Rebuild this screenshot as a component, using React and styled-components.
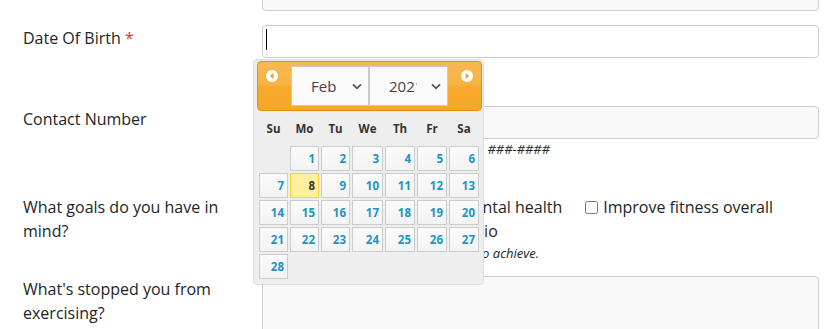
import React from 'react';
import styled, { createGlobalStyle } from 'styled-components';

const Global = createGlobalStyle`
  html, body { margin: 0; padding: 0; background: #fff; overflow: hidden; }
  body { font-family: "Open Sans", "Noto Sans", sans-serif; color: #212529; }
  *, *::before, *::after { box-sizing: border-box; }
`;

const Page = styled.form`
  padding: 0 20px 0 23px;
  margin-top: -22px;
`;

const Row = styled.div`
  display: grid;
  grid-template-columns: 239px 557px;
  margin-top: ${p => p.$gap || 0}px;
`;

const Label = styled.label`
  font-size: 16px;
  line-height: 24px;
  padding: 1px 15px 0 0;
`;

const Req = styled.span`
  color: #dc3545;
`;

const Control = styled.div`
  position: relative;
`;

const TextInput = styled.input`
  display: block;
  width: 100%;
  height: 33px;
  border: 1px solid #ccc;
  border-radius: 4px;
  background: ${p => (p.$focus ? '#fff' : '#f9f9f9')};
  padding: 4px 8px;
  font: inherit;
  font-size: 16px;
  outline: none;
`;

const TextArea = styled.textarea`
  display: block;
  width: 100%;
  height: 90px;
  border: 1px solid #ccc;
  border-radius: 4px;
  background: #f9f9f9;
  resize: none;
  font: inherit;
`;

const Caret = styled.span`
  position: absolute;
  left: 4px;
  top: 4px;
  width: 1px;
  height: 21px;
  background: #000;
`;

const Help = styled.div`
  font-size: 13px;
  line-height: 20px;
  font-style: italic;
  white-space: nowrap;
`;

const Checks = styled.div`
  padding-top: 1px;
  font-size: 16px;
  line-height: 24px;
`;

const CheckLine = styled.div`
  display: flex;
  column-gap: 22px;
  white-space: nowrap;
`;

const CheckItem = styled.label`
  display: inline-flex;
  align-items: center;
  gap: 5px;
`;

const Box = styled.input.attrs({ type: 'checkbox' })`
  width: 13px;
  height: 13px;
  margin: 0 0 0 1px;
`;

/* ---------- datepicker ---------- */

const Picker = styled.div`
  position: absolute;
  left: -9px;
  top: calc(100% + 1px);
  z-index: 10;
  width: 231px;
  padding: 1px 1px 3px 3px;
  background: #eeeeee;
  border: 1px solid #dddddd;
  border-radius: 4px;
  color: #333;
  font-family: "Open Sans", "Noto Sans", sans-serif;
`;

const PickerHeader = styled.div`
  display: flex;
  padding: 4px 0;
  border: 1px solid #e78f08;
  border-radius: 4px;
  background: linear-gradient(#f8b851 0%, #f7b445 45%, #f6a92b 55%, #f6a828 100%);
`;

const Nav = styled.a`
  display: flex;
  width: 33px;
  padding: 4px ${p => (p.$next ? '8px' : '0')} 0 ${p => (p.$next ? '0' : '8px')};
  justify-content: ${p => (p.$next ? 'flex-end' : 'flex-start')};
  align-items: flex-start;
  cursor: pointer;
`;

const SelectBox = styled.div`
  display: flex;
  align-items: center;
  width: ${p => p.$w}px;
  height: 40px;
  border: 1px solid #cacaca;
  background: #fafafa;
  padding: 0 6px 0 19px;
  font-size: 15px;
  color: #444;
`;

const SelectValue = styled.span`
  width: ${p => p.$vw}px;
  overflow: hidden;
  white-space: nowrap;
`;

const ChevronWrap = styled.span`
  display: flex;
  margin-left: auto;
`;

const Cal = styled.table`
  border-collapse: separate;
  border-spacing: 2px;
  table-layout: fixed;
  width: 224px;
  font-size: 11.5px;
  font-weight: 700;
`;

const Col = styled.col`
  width: ${p => p.$w}px;
`;

const DayName = styled.th`
  height: 31px;
  padding: 0;
  text-align: center;
  color: #333;
  font-weight: 700;
`;

const DayCell = styled.td`
  height: 25px;
  padding: 0;
`;

const Day = styled.a`
  display: block;
  height: 25px;
  line-height: 23px;
  padding: 0 3px;
  text-align: right;
  text-decoration: none;
  border: 1px solid ${p => (p.$today ? '#fed22f' : '#cccccc')};
  background: ${p => (p.$today ? '#ffef9e' : 'linear-gradient(#fafafa, #f3f3f3)')};
  color: ${p => (p.$today ? '#363636' : '#1c94c4')};
  cursor: pointer;
`;

const NavIcon = ({ dir }) => (
  <svg width="12" height="12" viewBox="0 0 12 12">
    <circle cx="6" cy="6" r="6" fill="#fff" />
    {dir === 'prev' ? (
      <polygon points="7.4,3 7.4,9 3.8,6" fill="#f2a02a" />
    ) : (
      <polygon points="4.6,3 4.6,9 8.2,6" fill="#f2a02a" />
    )}
  </svg>
);

const Chevron = () => (
  <svg width="10" height="7" viewBox="0 0 10 7">
    <path d="M1 1.3 L5 5.3 L9 1.3" fill="none" stroke="#555" strokeWidth="1.8" />
  </svg>
);

const dayNames = ['Su', 'Mo', 'Tu', 'We', 'Th', 'Fr', 'Sa'];
const colWidths = [29, 29, 29, 31, 30, 30, 30];
const weeks = [
  [null, 1, 2, 3, 4, 5, 6],
  [7, 8, 9, 10, 11, 12, 13],
  [14, 15, 16, 17, 18, 19, 20],
  [21, 22, 23, 24, 25, 26, 27],
  [28, null, null, null, null, null, null],
];

const DatePicker = () => (
  <Picker>
    <PickerHeader>
      <Nav title="Prev"><NavIcon dir="prev" /></Nav>
      <SelectBox $w={78}>
        <SelectValue $vw={30}>Feb</SelectValue>
        <ChevronWrap><Chevron /></ChevronWrap>
      </SelectBox>
      <SelectBox $w={79}>
        <SelectValue $vw={28}>2021</SelectValue>
        <ChevronWrap><Chevron /></ChevronWrap>
      </SelectBox>
      <Nav $next title="Next"><NavIcon dir="next" /></Nav>
    </PickerHeader>
    <Cal>
      <colgroup>
        {colWidths.map((w, i) => <Col key={i} $w={w} />)}
      </colgroup>
      <thead>
        <tr>{dayNames.map(d => <DayName key={d}>{d}</DayName>)}</tr>
      </thead>
      <tbody>
        {weeks.map((wk, i) => (
          <tr key={i}>
            {wk.map((d, j) => (
              <DayCell key={j}>{d && <Day $today={d === 8}>{d}</Day>}</DayCell>
            ))}
          </tr>
        ))}
      </tbody>
    </Cal>
  </Picker>
);

export default function App() {
  return (
    <>
      <Global />
      <Page>
        <Row>
          <Label>Email Address</Label>
          <Control><TextInput /></Control>
        </Row>
        <Row $gap={14}>
          <Label>Date Of Birth <Req>*</Req></Label>
          <Control>
            <TextInput $focus />
            <Caret />
            <DatePicker />
          </Control>
        </Row>
        <Row $gap={48}>
          <Label>Contact Number</Label>
          <Control>
            <TextInput />
            <Help>Enter a phone number in format (###) ###-####</Help>
          </Control>
        </Row>
        <Row $gap={35}>
          <Label>What goals do you have in mind?</Label>
          <Checks>
            <CheckLine>
              <CheckItem><Box />Reduce stress, improve mental health</CheckItem>
              <CheckItem><Box />Improve fitness overall</CheckItem>
            </CheckLine>
            <CheckLine>
              <CheckItem><Box />Lose weights, improve cardio</CheckItem>
            </CheckLine>
            <Help>Select any of the goals you would like to achieve.</Help>
          </Checks>
        </Row>
        <Row $gap={13}>
          <Label>What's stopped you from exercising?</Label>
          <Control><TextArea /></Control>
        </Row>
      </Page>
    </>
  );
}
